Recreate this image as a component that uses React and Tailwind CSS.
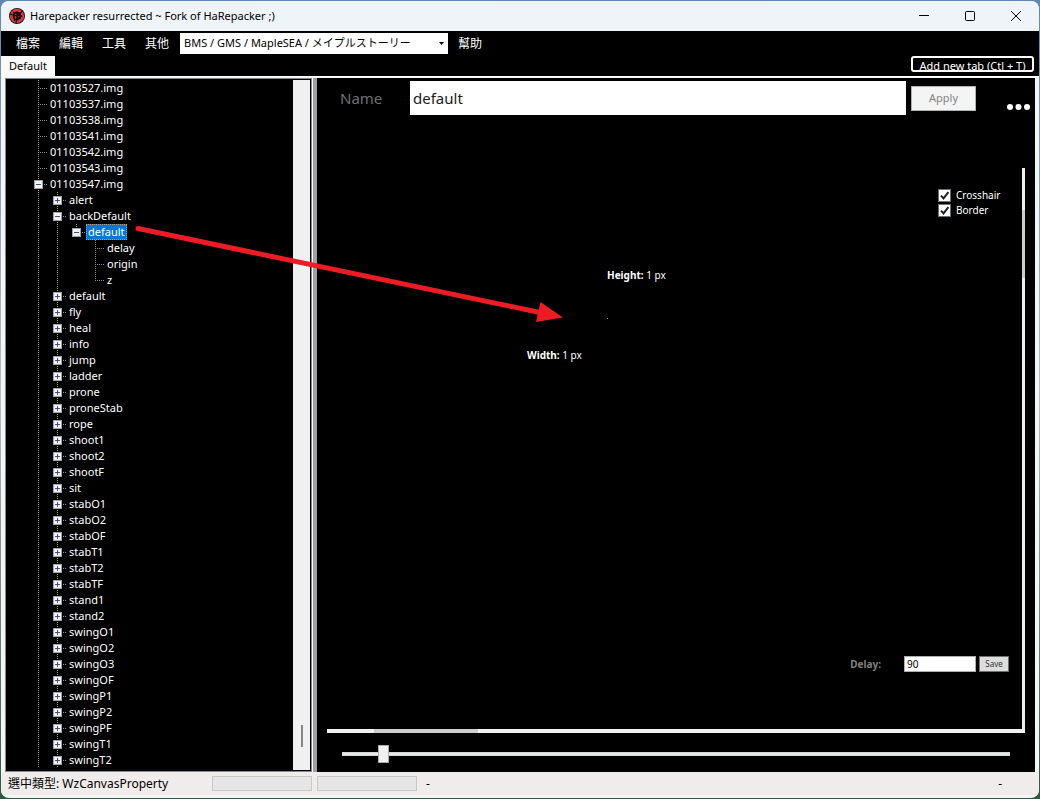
import React from 'react';

const images = ['01103527', '01103537', '01103538', '01103541', '01103542', '01103543'];

const actionsAfter = [
    'default', 'fly', 'heal', 'info', 'jump', 'ladder', 'prone', 'proneStab', 'rope',
    'shoot1', 'shoot2', 'shootF', 'sit', 'stabO1', 'stabO2', 'stabOF', 'stabT1', 'stabT2',
    'stabTF', 'stand1', 'stand2', 'swingO1', 'swingO2', 'swingO3', 'swingOF', 'swingP1',
    'swingP2', 'swingPF', 'swingT1', 'swingT2',
];

// guides: one letter per column, l = line, e = empty, t = tee, c = corner,
// + and - = toggle, ~ = open toggle on the last child
const rows = [
    ...images.map((name) => ({ name: `${name}.img`, guides: 't' })),
    { name: '01103547.img', guides: '-' },
    { name: 'alert', guides: 'l+' },
    { name: 'backDefault', guides: 'l-' },
    { name: 'default', guides: 'll~', selected: true },
    { name: 'delay', guides: 'llet' },
    { name: 'origin', guides: 'llet' },
    { name: 'z', guides: 'llec' },
    ...actionsAfter.map((name) => ({ name, guides: 'l+' })),
];

const Guide = ({ type }) => {
    const toggle = '+-~'.includes(type);
    const short = type === 'c' || type === '~';
    return (
        <svg width="19" height="16" viewBox="0 0 19 16" className="shrink-0" shapeRendering="crispEdges">
            {type !== 'e' && (
                <path d={short ? 'M9.5 0V9' : 'M9.5 0V16'} stroke="#909090" strokeDasharray="1 1" />
            )}
            {type !== 'e' && type !== 'l' && (
                <path d="M9 8.5H18" stroke="#909090" strokeDasharray="1 1" />
            )}
            {toggle && (
                <>
                    <rect x="5.5" y="4.5" width="8" height="8" fill="#f4f4f4" stroke="#a0a0a0" />
                    <path d="M7 8.5H12" stroke="#3a55a0" />
                    {type !== '-' && type !== '~' && <path d="M9.5 6V11" stroke="#3a55a0" />}
                </>
            )}
        </svg>
    );
};

const TitleBar = () => (
    <header className="flex h-[30px] items-center bg-[#eff4f9] pl-2 text-black">
        <svg width="16" height="16" viewBox="0 0 16 16" className="shrink-0">
            <circle cx="8" cy="8" r="8" fill="#1c0b0d" />
            <circle cx="8" cy="8" r="5.8" fill="none" stroke="#d93a40" strokeWidth="2.8" />
            <path d="M5 4.6L12.4 8L5.6 12.2Z" fill="#e0484c" stroke="#1c0b0d" strokeWidth="1.4" />
            <path d="M1 6L8.5 8L13.6 2.6M8.5 8L7 15.4" fill="none" stroke="#1c0b0d" strokeWidth="1.2" />
            <path d="M6.6 6.6L10 8L7 9.8Z" fill="#1c0b0d" />
        </svg>
        <h1 className="ml-[5px] flex-1 text-[11px]">Harepacker resurrected ~ Fork of HaRepacker ;)</h1>
        <button aria-label="Minimize" className="flex h-full w-[46px] items-center justify-center">
            <svg width="10" height="10" viewBox="0 0 10 10" stroke="#000">
                <path d="M0 4.5H10" />
            </svg>
        </button>
        <button aria-label="Maximize" className="flex h-full w-[46px] items-center justify-center">
            <svg width="10" height="10" viewBox="0 0 10 10" fill="none" stroke="#000">
                <rect x="0.5" y="0.5" width="9" height="9" rx="1" />
            </svg>
        </button>
        <button aria-label="Close" className="flex h-full w-[46px] items-center justify-center">
            <svg width="10" height="10" viewBox="0 0 10 10" stroke="#000">
                <path d="M0 0L10 10M10 0L0 10" />
            </svg>
        </button>
    </header>
);

const MenuBar = () => (
    <nav className="flex h-[25px] items-center bg-black pl-[15px] text-xs text-white">
        <button className="mr-[19px]">檔案</button>
        <button className="mr-[19px]">編輯</button>
        <button className="mr-[19px]">工具</button>
        <button className="mr-[11px]">其他</button>
        <div className="relative">
            <select
                aria-label="Encryption"
                className="block h-[21px] w-[268px] appearance-none bg-white pl-1 font-['Noto_Sans','Noto_Sans_CJK_JP',sans-serif] text-[11px] text-black"
            >
                <option>BMS / GMS / MapleSEA / メイプルストーリー</option>
            </select>
            <svg width="5" height="3" viewBox="0 0 5 3" className="pointer-events-none absolute top-[9px] right-1">
                <path d="M0 0H5L2.5 3Z" fill="#000" />
            </svg>
        </div>
        <button className="ml-[10px]">幫助</button>
    </nav>
);

const TabBar = () => (
    <div className="flex h-[21px] items-start justify-between border-b border-white bg-black pr-[5px]">
        <button className="h-[21px] w-[54px] bg-[#f9f9f9] text-[11px] text-black">Default</button>
        <button className="h-4 w-[123px] overflow-hidden rounded-[3px] border-2 border-white text-[11px] leading-4 text-white">
            Add new tab (Ctl + T)
        </button>
    </div>
);

const Tree = () => (
    <aside className="flex w-[307px] shrink-0 border border-[#828790] bg-black p-px">
        <ul className="flex-1 pl-[22px]">
            {rows.map((row, i) => (
                <li key={i} className="flex h-4 items-center text-[11px] leading-4 text-white">
                    {row.guides.split('').map((g, j) => (
                        <Guide key={j} type={g} />
                    ))}
                    {row.selected ? (
                        <span className="bg-[#0078d7] px-[2px] outline-1 -outline-offset-1 outline-dotted outline-[#ff8728]">
                            {row.name}
                        </span>
                    ) : (
                        <span className="px-[2px]">{row.name}</span>
                    )}
                </li>
            ))}
        </ul>
        <div className="flex w-[17px] flex-col items-center justify-end bg-[#f0f0f0] pb-[23px]">
            <div className="h-[22px] w-[2px] bg-[#858585]" />
        </div>
    </aside>
);

const Option = ({ label }) => (
    <label className="flex h-[15px] items-center gap-[5px] text-[10px] text-white">
        <span className="grid">
            <input
                type="checkbox"
                defaultChecked
                className="peer col-start-1 row-start-1 size-[13px] appearance-none border border-[#707070] bg-white"
            />
            <svg
                width="13"
                height="13"
                viewBox="0 0 13 13"
                className="pointer-events-none invisible col-start-1 row-start-1 peer-checked:visible"
            >
                <path d="M3 6.6L5.5 9.4L10.4 3.2" fill="none" stroke="#212121" strokeWidth="2" />
            </svg>
        </span>
        {label}
    </label>
);

const Canvas = () => (
    <div className="mx-[10px] mt-[53px] flex flex-1 flex-col">
        <div className="flex flex-1">
            <div className="relative flex flex-1 flex-col justify-between">
                <div className="mt-5 ml-auto w-[84px]">
                    <Option label="Crosshair" />
                    <Option label="Border" />
                </div>
                <p className="absolute top-[99px] left-[280px] text-[10px] leading-4 text-white">
                    <b>Height:</b> 1 px
                </p>
                <div className="absolute top-[150px] left-[280px] size-px bg-[#a0a0a0]" />
                <p className="absolute top-[179px] left-[200px] text-[10px] leading-4 text-white">
                    <b>Width:</b> 1 px
                </p>
                <div className="mb-[57px] flex items-center justify-end pr-[13px] text-[10px]">
                    <label htmlFor="delay" className="mr-[23px] font-bold text-[#808080]">
                        Delay:
                    </label>
                    <input
                        id="delay"
                        defaultValue="90"
                        className="h-4 w-[72px] border border-[#abadb3] bg-white px-[2px] text-black"
                    />
                    <button className="ml-[3px] h-4 w-[30px] border border-[#707070] bg-[#ddd] text-[8px] leading-3 text-[#333]">
                        Save
                    </button>
                </div>
            </div>
            <div className="w-[3px] bg-[#f0f0f0] pt-[42px]">
                <div className="h-[68px] bg-[#cdcdcd]" />
            </div>
        </div>
        <div className="h-1 bg-[#f0f0f0] pl-[47px]">
            <div className="h-1 w-[104px] bg-[#cdcdcd]" />
        </div>
    </div>
);

const Editor = () => (
    <main className="flex flex-1 flex-col bg-black">
        <div className="mt-[3px] flex h-[34px] items-center pr-[5px] pl-[23px]">
            <label htmlFor="name" className="w-[70px] text-[15px] text-[#707070]">
                Name
            </label>
            <input
                id="name"
                defaultValue="default"
                className="h-[34px] min-w-0 flex-1 bg-white px-[3px] text-[15px] text-[#1a1a1a]"
            />
            <button className="ml-[5px] h-[25px] w-[65px] border border-[#adb2b5] bg-[#f4f4f4] text-[11px] text-[#838383]">
                Apply
            </button>
            <button aria-label="More" className="mt-[18px] ml-[31px]">
                <svg width="23" height="6" viewBox="0 0 23 6" fill="#fff" className="block">
                    <circle cx="3" cy="3" r="3" />
                    <circle cx="11.5" cy="3" r="3" />
                    <circle cx="20" cy="3" r="3" />
                </svg>
            </button>
        </div>
        <Canvas />
        <input
            type="range"
            aria-label="Zoom"
            min="0"
            max="1000"
            defaultValue="54"
            className="mt-3 mr-[25px] mb-[9px] ml-[25px] block h-[18px] appearance-none bg-transparent [&::-webkit-slider-runnable-track]:h-1 [&::-webkit-slider-runnable-track]:border [&::-webkit-slider-runnable-track]:border-[#d6d6d6] [&::-webkit-slider-runnable-track]:bg-[#e7eaea] [&::-webkit-slider-thumb]:-mt-2 [&::-webkit-slider-thumb]:h-[18px] [&::-webkit-slider-thumb]:w-[11px] [&::-webkit-slider-thumb]:appearance-none [&::-webkit-slider-thumb]:border [&::-webkit-slider-thumb]:border-[#acacac] [&::-webkit-slider-thumb]:bg-[#f0f0f0]"
        />
    </main>
);

const StatusBar = () => (
    <footer className="flex h-[23px] items-center bg-[#f0eceb] pr-[37px] pl-[7px] text-xs text-black">
        <span className="w-[204px]">選中類型: WzCanvasProperty</span>
        <div className="h-[15px] w-[100px] border border-[#c8c8c8] bg-[#e6e6e6]" />
        <div className="ml-[5px] h-[15px] w-[100px] border border-[#c8c8c8] bg-[#e6e6e6]" />
        <span className="ml-[9px]">-</span>
        <span className="ml-auto">-</span>
    </footer>
);

const Arrow = () => (
    <svg width="430" height="100" viewBox="0 0 430 100" className="pointer-events-none absolute top-[224px] left-[134px]">
        <path d="M4 4.500L406 88.500" stroke="#ed1c24" strokeWidth="5" strokeLinecap="round" />
        <path d="M406.500 78L429 93.500L402 98Z" fill="#ed1c24" />
    </svg>
);

const App = () => {
    return (
        <div className="relative flex min-h-screen flex-col bg-linear-to-b from-[#5f88b0] via-[#b4bfc4] to-[#2f5740] p-px font-['Noto_Sans','Noto_Sans_CJK_TC',sans-serif]">
            <div className="flex flex-1 flex-col overflow-hidden rounded-lg bg-[#f5f5f5] pb-[3px]">
                <TitleBar />
                <MenuBar />
                <TabBar />
                <div className="flex flex-1 px-1 pt-px">
                    <Tree />
                    <div className="w-[5px] shrink-0 border-l border-white bg-[#a0a0a0]" />
                    <Editor />
                </div>
                <StatusBar />
            </div>
            <Arrow />
        </div>
    );
};

export default App;
